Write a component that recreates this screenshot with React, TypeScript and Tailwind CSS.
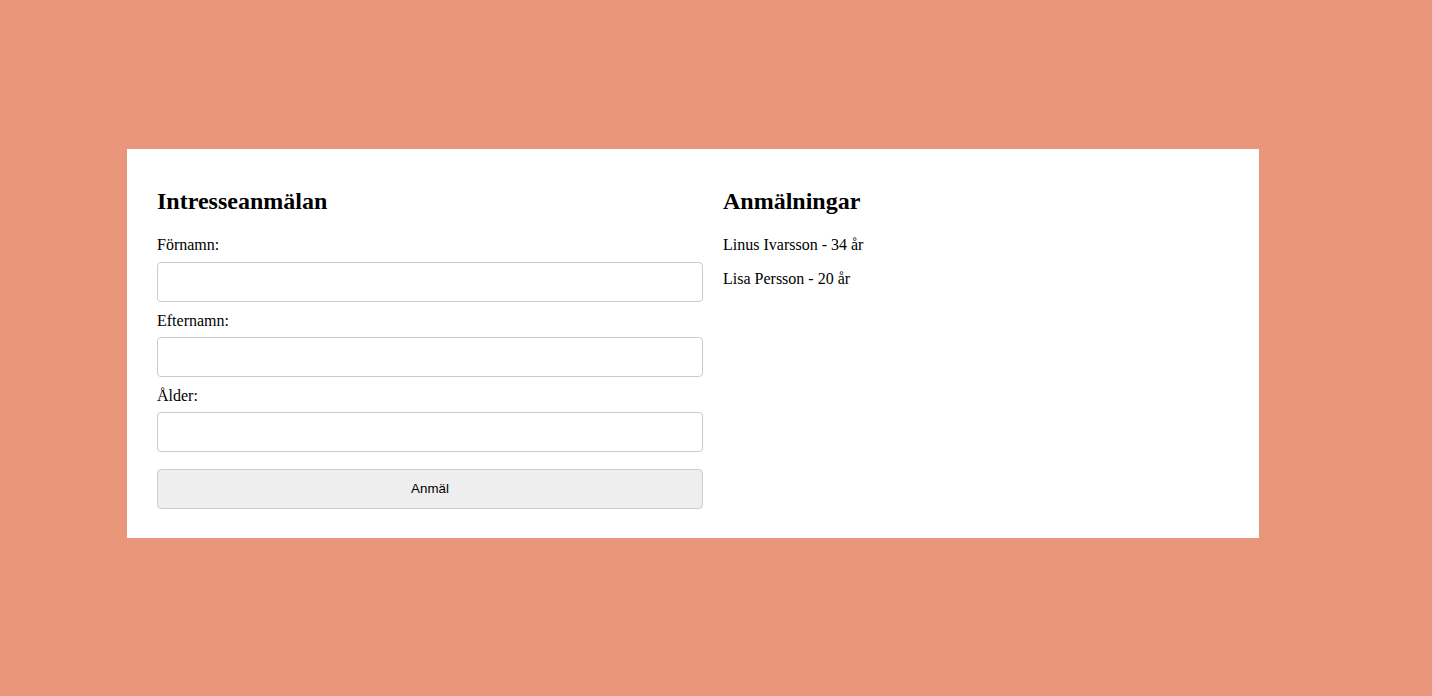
import React from "react";

export default function App() {
  return (
    <div className="min-h-[696px] w-full bg-[#E9967A] pt-[149px] pl-[127px] font-['Liberation_Serif',serif] text-[16px] text-black">
      <div className="flex w-[1132px] bg-white px-[30px] pt-[39px] pb-[29px]">
        <div className="flex w-[546px] flex-col">
          <h2 className="m-0 text-[24px] font-bold leading-[27px]">Intresseanmälan</h2>
          <label className="mt-[21px] block leading-[18px]">Förnamn:</label>
          <input className="mt-[8px] h-[40px] w-full rounded-[4px] border border-[#cccccc] bg-white px-2" />
          <label className="mt-[10px] block leading-[18px]">Efternamn:</label>
          <input className="mt-[7px] h-[40px] w-full rounded-[4px] border border-[#cccccc] bg-white px-2" />
          <label className="mt-[10px] block leading-[18px]">Ålder:</label>
          <input className="mt-[7px] h-[40px] w-full rounded-[4px] border border-[#cccccc] bg-white px-2" />
          <button className="mt-[17px] h-[40px] w-full rounded-[4px] border border-[#cccccc] bg-[#eeeeee] font-['Liberation_Sans',Arial,sans-serif] text-[13.33px] text-black">
            Anmäl
          </button>
        </div>
        <div className="ml-[20px] flex flex-1 flex-col">
          <h2 className="m-0 text-[24px] font-bold leading-[27px]">Anmälningar</h2>
          <p className="mt-[21px] leading-[18px]">Linus Ivarsson - 34 år</p>
          <p className="mt-[16px] leading-[18px]">Lisa Persson - 20 år</p>
        </div>
      </div>
    </div>
  );
}
